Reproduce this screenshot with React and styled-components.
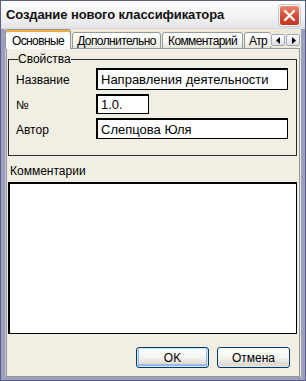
import styled, { createGlobalStyle } from "styled-components";

const GlobalStyle = createGlobalStyle`
  html, body {
    margin: 0;
    padding: 0;
    background: #ffffff;
  }
  * {
    box-sizing: border-box;
  }
`;

const tabs = [
  { label: "Основные", width: 66, active: true },
  { label: "Дополнительно", width: 89 },
  { label: "Комментарий", width: 81 },
  { label: "Атр", width: 27 },
];

const fields = [
  { label: "Название", value: "Направления деятельности", width: 192, height: 22 },
  { label: "№", value: "1.0.", width: 53, height: 20 },
  { label: "Автор", value: "Слепцова Юля", width: 192, height: 21 },
];

const App = () => {
  return (
    <>
      <GlobalStyle />
      <Window>
        <TitleBar>
          <Title>Создание нового классификатора</Title>
          <CloseButton aria-label="Закрыть">
            <svg width="13" height="13" viewBox="0 0 13 13">
              <path d="M2 2 L11 11 M11 2 L2 11" stroke="#ffffff" strokeWidth="2.4" strokeLinecap="round" />
            </svg>
          </CloseButton>
        </TitleBar>
        <Body>
          <TabStrip>
            {tabs.map((tab, index) => (
              <Tab key={index} $active={tab.active} $width={tab.width}>
                {tab.label}
              </Tab>
            ))}
            <ScrollArrows>
              <ArrowButton>
                <svg width="5" height="7" viewBox="0 0 5 7">
                  <path d="M4 0 L0 3.5 L4 7 Z" fill="#000" />
                </svg>
              </ArrowButton>
              <ArrowButton>
                <svg width="5" height="7" viewBox="0 0 5 7">
                  <path d="M1 0 L5 3.5 L1 7 Z" fill="#000" />
                </svg>
              </ArrowButton>
            </ScrollArrows>
          </TabStrip>
          <Panel>
            <GroupBox>
              <Legend>Свойства</Legend>
              <FieldGrid>
                {fields.map((field, index) => (
                  <FieldRow key={index}>
                    <FieldLabel>{field.label}</FieldLabel>
                    <TextBox $width={field.width} $height={field.height}>
                      {field.value}
                    </TextBox>
                  </FieldRow>
                ))}
              </FieldGrid>
            </GroupBox>
            <CommentLabel>Комментарии</CommentLabel>
            <CommentBox />
            <ButtonRow>
              <Button $default>OK</Button>
              <Button>Отмена</Button>
            </ButtonRow>
          </Panel>
        </Body>
      </Window>
    </>
  );
};

const Window = styled.div`
  width: 306px;
  height: 381px;
  display: flex;
  flex-direction: column;
  border: 1px solid #5b5f86;
  background: #9c9fbd;
  font-family: "Liberation Sans", Arial, sans-serif;
`;

const TitleBar = styled.div`
  height: 28px;
  display: flex;
  align-items: center;
  justify-content: space-between;
  padding: 0 5px 0 5px;
  background: linear-gradient(#fdfdfd, #f1f1f3 60%, #e4e4e8);
  border-bottom: 1px solid #d8d8de;
`;

const Title = styled.div`
  font-size: 13px;
  font-weight: bold;
  color: #111111;
  letter-spacing: -0.1px;
`;

const CloseButton = styled.div`
  width: 21px;
  height: 21px;
  margin-top: 2px;
  display: flex;
  align-items: center;
  justify-content: center;
  border: 1px solid #ffffff;
  border-radius: 3px;
  background: linear-gradient(#ec8a72, #d8503a 45%, #c3351f);
  box-shadow: 0 0 0 1px #c5c5cc;
`;

const Body = styled.div`
  flex: 1;
  display: flex;
  flex-direction: column;
  margin: 0 4px 3px 4px;
  background: #ece9d8;
  border-left: 1px solid #c9c8d6;
`;

const TabStrip = styled.div`
  position: relative;
  height: 20px;
  display: flex;
  align-items: flex-end;
  margin-left: -1px;
  overflow: hidden;
  z-index: 1;
  margin-bottom: -1px;
`;

const Tab = styled.div`
  flex-shrink: 0;
  width: ${(p) => p.$width}px;
  height: ${(p) => (p.$active ? "20px" : "17px")};
  padding-top: ${(p) => (p.$active ? "3px" : "1px")};
  padding-left: ${(p) => (p.$width < 40 ? "4px" : "0")};
  margin-right: 1px;
  display: flex;
  align-items: center;
  justify-content: ${(p) => (p.$width < 40 ? "flex-start" : "center")};
  white-space: nowrap;
  font-size: 12px;
  letter-spacing: -0.6px;
  color: #000000;
  border: 1px solid #919b9c;
  border-bottom: ${(p) => (p.$active ? "none" : "1px solid #919b9c")};
  border-radius: 3px 3px 0 0;
  background: ${(p) =>
    p.$active ? "#fcfcfe" : "linear-gradient(#ffffff, #f3f3ef 70%, #e4e3dc)"};
  box-shadow: ${(p) => (p.$active ? "inset 0 2px 0 #f4a93a" : "none")};
`;

const ScrollArrows = styled.div`
  position: absolute;
  right: 1px;
  top: 5px;
  display: flex;
  gap: 1px;
  background: #ece9d8;
  padding-left: 1px;
`;

const ArrowButton = styled.div`
  width: 14px;
  height: 12px;
  display: flex;
  align-items: center;
  justify-content: center;
  border: 1px solid #a6a9b8;
  border-radius: 2px;
  background: linear-gradient(#ffffff, #dcdde6);
`;

const Panel = styled.div`
  flex: 1;
  display: flex;
  flex-direction: column;
  margin-right: 1px;
  padding: 0 2px 0 1px;
  border: 1px solid #919b9c;
  background: #f1efe3;
`;

const GroupBox = styled.fieldset`
  margin: 3px 0 0 0;
  padding: 0 0 16px 7px;
  border: 1px solid #2a2a2a;
  min-width: 0;
`;

const Legend = styled.legend`
  padding: 0;
  margin-left: 2px;
  font-size: 12px;
  line-height: 14px;
  color: #000000;
`;

const FieldGrid = styled.div`
  display: flex;
  flex-direction: column;
  gap: 4px;
  padding-top: 2px;
`;

const FieldRow = styled.div`
  display: grid;
  grid-template-columns: 80px auto;
  align-items: center;
`;

const FieldLabel = styled.div`
  font-size: 12px;
  color: #000000;
  padding-top: 2px;
`;

const TextBox = styled.div`
  width: ${(p) => p.$width}px;
  height: ${(p) => p.$height}px;
  display: flex;
  align-items: center;
  padding-left: 3px;
  font-size: 13px;
  color: #000000;
  background: #ffffff;
  border: 1px solid #000000;
  border-top-width: 2px;
  border-left-width: 2px;
`;

const CommentLabel = styled.div`
  margin: 8px 0 4px 2px;
  font-size: 12px;
  line-height: 14px;
  color: #000000;
`;

const CommentBox = styled.div`
  height: 152px;
  background: #ffffff;
  border: 1px solid #000000;
  border-top-width: 2px;
  border-left-width: 2px;
`;

const ButtonRow = styled.div`
  display: flex;
  justify-content: flex-end;
  gap: 8px;
  margin-top: 13px;
  padding-right: 7px;
`;

const Button = styled.div`
  width: 73px;
  height: 21px;
  display: flex;
  align-items: center;
  justify-content: center;
  font-size: 12px;
  color: #000000;
  border: 1px solid #003c74;
  border-radius: 3px;
  background: linear-gradient(#ffffff, #f4f4f0 50%, #d6d0c5);
  box-shadow: ${(p) =>
    p.$default ? "inset 0 0 0 1px #cee7ff, inset 0 -1px 0 2px #98b8ea" : "inset 0 -2px 0 #e3e0d6"};
`;

export default App;
